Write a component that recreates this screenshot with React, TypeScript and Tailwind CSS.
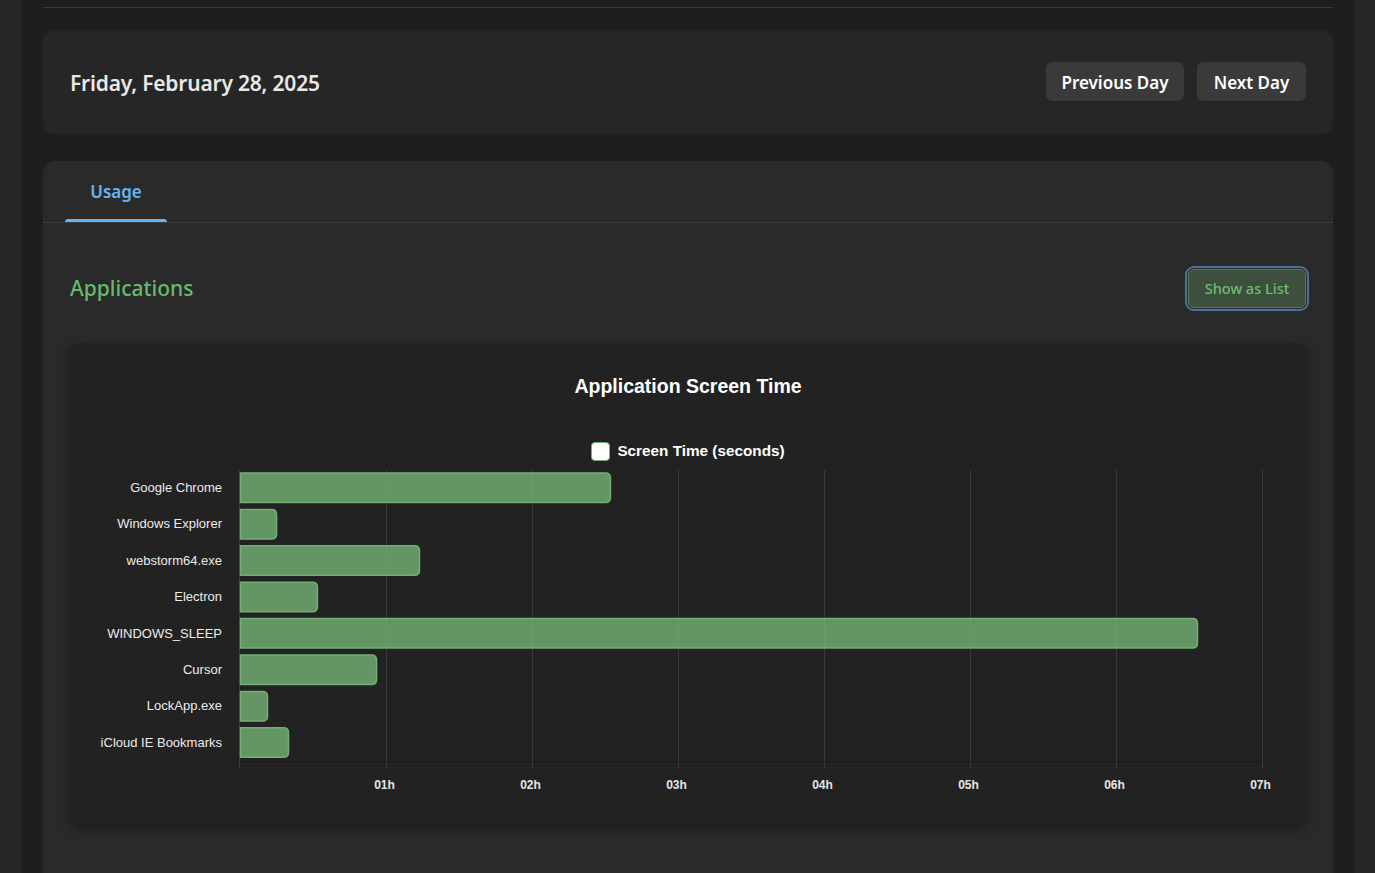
import React from 'react';

const apps = [
  { name: 'Google Chrome', hours: 2.534 },
  { name: 'Windows Explorer', hours: 0.247 },
  { name: 'webstorm64.exe', hours: 1.226 },
  { name: 'Electron', hours: 0.527 },
  { name: 'WINDOWS_SLEEP', hours: 6.555 },
  { name: 'Cursor', hours: 0.932 },
  { name: 'LockApp.exe', hours: 0.185 },
  { name: 'iCloud IE Bookmarks', hours: 0.329 },
];

const X0 = 171;
const HOUR = 146;
const TOP = 5;
const ROW = 36.4;

const barPath = (x: number, y: number, w: number, h: number, r: number) =>
  `M${x},${y} H${x + w - r} Q${x + w},${y} ${x + w},${y + r} V${y + h - r} Q${x + w},${y + h} ${x + w - r},${y + h} H${x} Z`;

const ScreenTimeChart = () => {
  const bottom = TOP + ROW * apps.length;
  return (
    <svg width="1237" height="343" className="block" style={{ fontFamily: '"Liberation Sans", Arial, sans-serif' }}>
      {[1, 2, 3, 4, 5, 6, 7].map((h) => (
        <line key={h} x1={X0 + h * HOUR + 0.5} x2={X0 + h * HOUR + 0.5} y1={TOP} y2={bottom + 8} stroke="#3a3a3a" strokeWidth="1" />
      ))}
      <line x1={X0} x2={X0 + 7 * HOUR} y1={bottom + 0.5} y2={bottom + 0.5} stroke="#1a1a1a" strokeWidth="1" />
      <line x1={X0 - 0.5} x2={X0 - 0.5} y1={TOP} y2={bottom + 8} stroke="#3a3a3a" strokeWidth="1" />
      {apps.map((a, i) => {
        const y = TOP + i * ROW + 3;
        const w = a.hours * HOUR;
        return (
          <g key={a.name}>
            <path d={barPath(X0 + 0.5, y, w, 29.5, 5)} fill="rgba(118,179,118,0.8)" stroke="#72b072" strokeWidth="1.5" />
            <text x={153} y={y + 19} textAnchor="end" fontSize="13" fill="#ececec">
              {a.name}
            </text>
          </g>
        );
      })}
      {[1, 2, 3, 4, 5, 6, 7].map((h) => (
        <text key={h} x={X0 + h * HOUR - 1.5} y={324} textAnchor="middle" fontSize="12" fontWeight="700" fill="#e6e6e6">
          {`0${h}h`}
        </text>
      ))}
    </svg>
  );
};

const App = () => {
  return (
    <div className="flex h-[873px] overflow-hidden bg-[#262626]" style={{ fontFamily: '"Noto Sans", "Open Sans", sans-serif' }}>
      <div className="w-[21px] shrink-0" />
      <main className="w-[1334px] shrink-0 bg-[#1e1e1e] px-[22px]">
        <div className="h-[8px] border-b border-[#3a3a3a]" />

        <section className="mt-[22px] h-[104px] rounded-xl bg-[#262626] px-[27px] flex items-center justify-between">
          <h1 className="mt-[4px] text-[21px] font-semibold text-[#e8e8e8] tracking-[-0.2px]">Friday, February 28, 2025</h1>
          <div className="flex gap-[13px] pb-[1px]">
            <button className="h-[39px] w-[138px] rounded-md bg-[#3a3a3a] pt-[3px] text-[17px] font-semibold text-white">Previous Day</button>
            <button className="h-[39px] w-[109px] rounded-md bg-[#3a3a3a] pt-[3px] text-[17px] font-semibold text-white">Next Day</button>
          </div>
        </section>

        <section className="mt-[27px] h-[800px] rounded-xl bg-[#2a2a2a]">
          <div className="flex h-[62px] border-b border-[#3b3b3b] px-[22px]">
            <button className="relative w-[102px] text-[17px] font-semibold text-[#64b5f6]">
              Usage
              <span className="absolute bottom-0 left-0 right-0 h-[3px] rounded-t bg-[#64b5f6]" />
            </button>
          </div>

          <div className="px-[26px]">
            <div className="mt-[46px] flex items-center justify-between pl-[1px] pr-[1px]">
              <h2 className="text-[21px] font-medium text-[#66bb6a]">Applications</h2>
              <button className="h-[39px] w-[118px] rounded-md border border-[#587a58] bg-[#3d4f3d] text-[14.5px] font-medium text-[#6dbd6d] outline-2 outline-offset-[1px] outline-[#4a739c]">
                Show as List
              </button>
            </div>

            <div className="mt-[35px] h-[483px] rounded-xl bg-[#222222] shadow-[0_4px_12px_rgba(0,0,0,0.3)] pt-[30px]">
              <div
                className="text-center text-[19.5px] font-bold leading-[26px] text-white"
                style={{ fontFamily: '"Liberation Sans", Arial, sans-serif' }}
              >
                Application Screen Time
              </div>
              <div
                className="mt-[41px] flex items-center justify-center gap-[7px] text-[15.3px] font-bold text-white"
                style={{ fontFamily: '"Liberation Sans", Arial, sans-serif' }}
              >
                <span className="h-[19px] w-[19px] rounded-[4px] border border-[#72b072] bg-white" />
                <span>Screen Time (seconds)</span>
              </div>
              <div className="mt-[2px]">
                <ScreenTimeChart />
              </div>
            </div>
          </div>
        </section>
      </main>
      <div className="w-[20px] shrink-0" />
    </div>
  );
};

export default App;
